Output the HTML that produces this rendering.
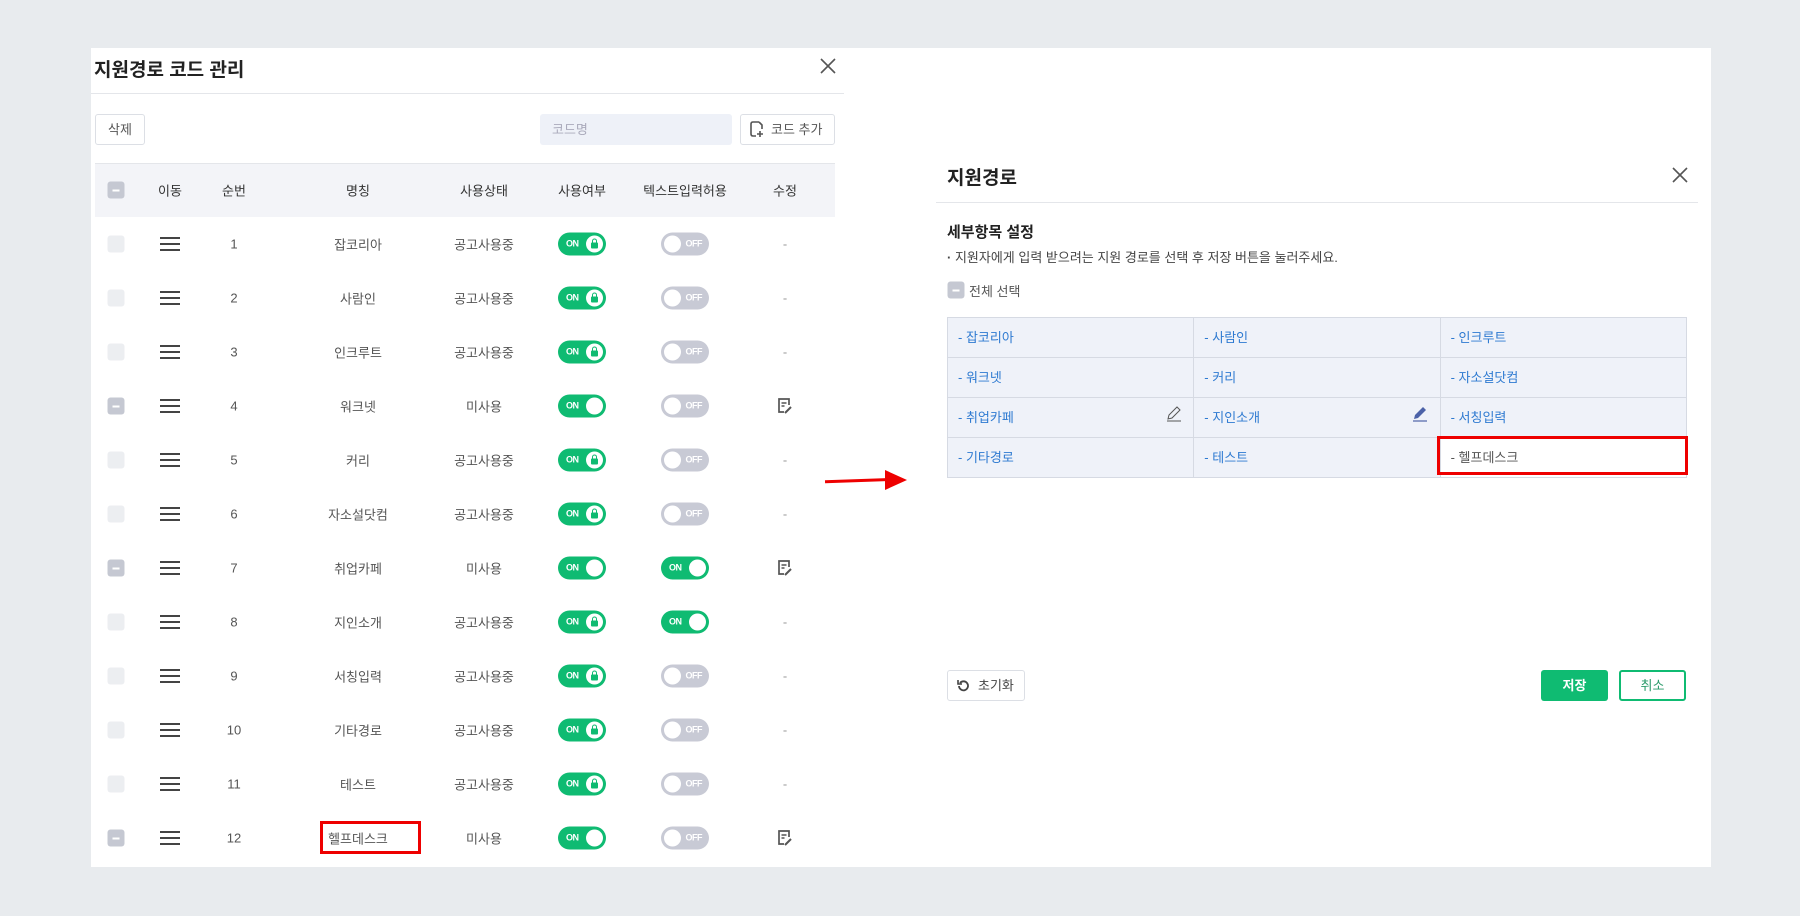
<!DOCTYPE html><html><head><meta charset="utf-8"><style>
*{margin:0;padding:0;box-sizing:border-box}
body{width:1800px;height:916px;background:#e8ebee;font-family:"Liberation Sans","Noto Sans CJK KR",sans-serif;position:relative;overflow:hidden;color:#333}
.a{position:absolute}
.panel{left:91px;top:48px;width:1620px;height:819px;background:#fff}
.t{font-size:13px;color:#555;text-align:center;transform:translate(-50%,-50%)}
.cb{width:17px;height:17px;border-radius:3px;background:#eceef1;transform:translate(-50%,-50%)}
.cbm{background:#c5c8d2}
.cbm:after{content:"";position:absolute;left:5px;top:8px;width:7px;height:2px;background:#fff}
.hb{width:20px;height:14px;transform:translate(-50%,-50%);border-top:2px solid #444;border-bottom:2px solid #444}
.hb:after{content:"";position:absolute;left:0;right:0;top:4px;height:2px;background:#444}
.tg{width:48px;height:23px;border-radius:12px;transform:translate(-50%,-50%);font-size:9px;font-weight:bold;color:#fff;letter-spacing:-0.5px}
.on{background:#0fbb72}
.on span{position:absolute;left:8px;top:6px}
.on i{position:absolute;right:3px;top:3px;width:17px;height:17px;border-radius:50%;background:#fff}
.lk b{position:absolute;left:5px;top:7px;width:7px;height:6px;background:#0fbb72;border-radius:1px}
.lk b:before{content:"";position:absolute;left:1px;top:-4px;width:3px;height:4px;border:1px solid #0fbb72;border-bottom:none;border-radius:3px 3px 0 0}
.off{background:#c8cad5}
.off span{position:absolute;right:7px;top:6px}
.off i{position:absolute;left:3px;top:3px;width:17px;height:17px;border-radius:50%;background:#fff}
.gc{position:absolute;height:40px;border-right:1px solid #d6dae3;border-bottom:1px solid #d6dae3;background:#eff2f9;color:#2e7ad1;font-size:13px;line-height:40px;padding-left:10px}
</style></head><body>
<div class="a panel"></div>
<div class="a" style="left:94px;top:55px;font-size:19px;font-weight:bold;color:#222">지원경로 코드 관리</div>
<svg class="a" style="left:820px;top:58px" width="16" height="16" viewBox="0 0 16 16"><path d="M1 1l14 14M15 1L1 15" stroke="#555" stroke-width="1.6"/></svg>
<div class="a" style="left:91px;top:93px;width:753px;height:1px;background:#e4e6ea"></div>
<div class="a" style="left:95px;top:114px;width:50px;height:31px;border:1px solid #dcdfe5;border-radius:3px;font-size:13px;color:#555;line-height:29px;text-align:center">삭제</div>
<div class="a" style="left:540px;top:114px;width:192px;height:31px;background:#eef1f8;border-radius:3px;font-size:13px;color:#aab;line-height:31px;padding-left:12px">코드명</div>
<div class="a" style="left:740px;top:114px;width:95px;height:31px;border:1px solid #dcdfe5;border-radius:3px;font-size:13px;color:#555;line-height:29px;padding-left:30px">코드 추가</div>
<svg class="a" style="left:750px;top:121px" width="14" height="16" viewBox="0 0 14 16"><path d="M9 1H3Q1 1 1 3v10q0 2 2 2h3M9 1l3 3v4" fill="none" stroke="#555" stroke-width="1.6"/><path d="M10 10v6M7 13h6" stroke="#555" stroke-width="1.6"/></svg>
<div class="a" style="left:95px;top:163px;width:740px;height:54px;background:#f3f4f8;border-top:1px solid #e4e6ea"></div>
<div class="a cb cbm" style="left:116px;top:190px"></div>
<div class="a t" style="left:170px;top:190px;color:#333">이동</div>
<div class="a t" style="left:234px;top:190px;color:#333">순번</div>
<div class="a t" style="left:358px;top:190px;color:#333">명칭</div>
<div class="a t" style="left:484px;top:190px;color:#333">사용상태</div>
<div class="a t" style="left:582px;top:190px;color:#333">사용여부</div>
<div class="a t" style="left:685px;top:190px;color:#333">텍스트입력허용</div>
<div class="a t" style="left:785px;top:190px;color:#333">수정</div>
<div id="rows"></div>
<script>
var d=[["잡코리아",0,0,0],["사람인",0,0,0],["인크루트",0,0,0],["워크넷",1,0,1],["커리",0,0,0],["자소설닷컴",0,0,0],["취업카페",1,1,1],["지인소개",0,1,0],["서칭입력",0,0,0],["기타경로",0,0,0],["테스트",0,0,0],["헬프데스크",1,0,1]];
var h="";
d.forEach(function(r,i){var y=244+i*54;
h+='<div class="a cb'+(r[1]?' cbm':'')+'" style="left:116px;top:'+y+'px"></div>';
h+='<div class="a hb" style="left:170px;top:'+y+'px"></div>';
h+='<div class="a t" style="left:234px;top:'+y+'px">'+(i+1)+'</div>';
h+='<div class="a t" style="left:358px;top:'+y+'px">'+r[0]+'</div>';
h+='<div class="a t" style="left:484px;top:'+y+'px">'+(r[1]?'미사용':'공고사용중')+'</div>';
h+='<div class="a tg on'+(r[1]?'':' lk')+'" style="left:582px;top:'+y+'px"><span>ON</span><i>'+(r[1]?'':'<b></b>')+'</i></div>';
h+=r[2]?'<div class="a tg on" style="left:685px;top:'+y+'px"><span>ON</span><i></i></div>':'<div class="a tg off" style="left:685px;top:'+y+'px"><span>OFF</span><i></i></div>';
h+=r[3]?'<svg class="a" style="left:776px;top:'+(y-9)+'px" width="18" height="18" viewBox="0 0 18 18"><path d="M8 15H3V2h10v6" fill="none" stroke="#555" stroke-width="1.7"/><path d="M5.5 6h5M5.5 9h3" stroke="#555" stroke-width="1.5"/><path d="M9 16l6-6" stroke="#555" stroke-width="2"/></svg>':'<div class="a t" style="left:785px;top:'+y+'px;color:#999">-</div>';
});
document.getElementById("rows").innerHTML=h;
</script>
<div class="a" style="left:320px;top:821px;width:101px;height:33px;border:3px solid #ee0000"></div>
<div class="a" style="left:825px;top:479px;width:70px;height:3px;background:#e00;transform:rotate(-2deg)"></div>
<div class="a" style="left:885px;top:470px;width:0;height:0;border-left:22px solid #e00;border-top:10px solid transparent;border-bottom:10px solid transparent"></div>
<div class="a" style="left:947px;top:163px;font-size:19px;font-weight:bold;color:#222">지원경로</div>
<svg class="a" style="left:1672px;top:167px" width="16" height="16" viewBox="0 0 16 16"><path d="M1 1l14 14M15 1L1 15" stroke="#555" stroke-width="1.6"/></svg>
<div class="a" style="left:936px;top:202px;width:762px;height:1px;background:#e4e6ea"></div>
<div class="a" style="left:947px;top:221px;font-size:15px;font-weight:bold;color:#222">세부항목 설정</div>
<div class="a" style="left:947px;top:247px;font-size:13px;color:#444"><b>·</b> 지원자에게 입력 받으려는 지원 경로를 선택 후 저장 버튼을 눌러주세요.</div>
<div class="a cb cbm" style="left:956px;top:290px"></div>
<div class="a" style="left:969px;top:281px;font-size:13px;color:#555">전체 선택</div>
<div class="a" style="left:947px;top:317px;width:740px;height:161px;border-left:1px solid #d6dae3;border-top:1px solid #d6dae3"></div>
<div id="g"></div>
<script>
var n=["잡코리아","사람인","인크루트","워크넷","커리","자소설닷컴","취업카페","지인소개","서칭입력","기타경로","테스트","헬프데스크"],g="";
n.forEach(function(s,i){var c=i%3,r=Math.floor(i/3);g+='<div class="gc" style="left:'+(948+c*246.3)+'px;top:'+(318+r*40)+'px;width:246.3px'+(i==11?';background:#fff;color:#555':'')+'">- '+s+'</div>';});
document.getElementById("g").innerHTML=g;
</script>
<svg class="a" style="left:1166px;top:406px" width="16" height="16" viewBox="0 0 16 16"><path d="M2 13l1-4 8-8 3 3-8 8zM1 15h14" fill="none" stroke="#555" stroke-width="1"/></svg>
<svg class="a" style="left:1412px;top:406px" width="16" height="16" viewBox="0 0 16 16"><path d="M2 13l1-4 8-8 3 3-8 8z" fill="#4c62a8"/><path d="M1 15h14" stroke="#4c62a8" stroke-width="1.2"/></svg>
<div class="a" style="left:1437px;top:436px;width:251px;height:39px;border:3px solid #ee0000"></div>
<div class="a" style="left:947px;top:670px;width:78px;height:31px;border:1px solid #dcdfe5;border-radius:3px;font-size:13px;color:#444;line-height:29px;padding-left:30px">초기화</div>
<svg class="a" style="left:957px;top:679px" width="13" height="13" viewBox="0 0 13 13"><path d="M3 4A4.5 4.5 0 1 1 2 7" fill="none" stroke="#444" stroke-width="1.8"/><path d="M1 1v4h4" fill="none" stroke="#444" stroke-width="1.6"/></svg>
<div class="a" style="left:1541px;top:670px;width:67px;height:31px;background:#0fbb72;border-radius:3px;color:#fff;font-size:13px;font-weight:bold;line-height:31px;text-align:center">저장</div>
<div class="a" style="left:1619px;top:670px;width:67px;height:31px;border:2px solid #0fbb72;border-radius:3px;color:#2a9a6a;font-size:13px;line-height:27px;text-align:center">취소</div>
</body></html>
